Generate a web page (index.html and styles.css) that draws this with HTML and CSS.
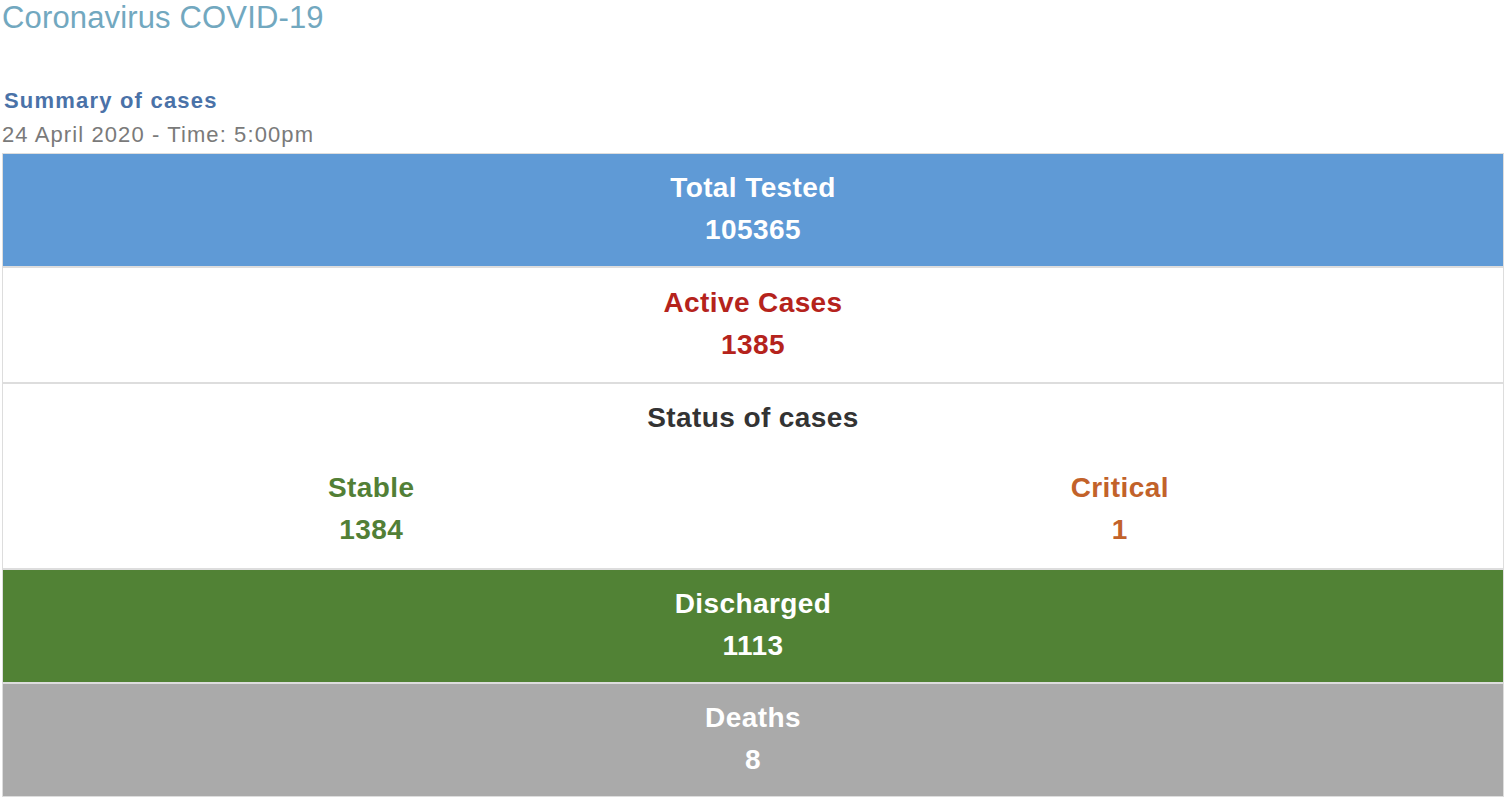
FILE: index.html
```html
<!DOCTYPE html>
<html lang="en">
<head>
<meta charset="utf-8">
<title>Coronavirus COVID-19</title>
<link rel="stylesheet" href="styles.css">
</head>
<body>
<h1 class="title">Coronavirus COVID-19</h1>
<div class="summary">Summary of cases</div>
<div class="date">24 April 2020 - Time: 5:00pm</div>
<div class="board">
  <div class="row row-tested">
    <div class="label">Total&nbsp;Tested</div>
    <div class="value">105365</div>
  </div>
  <div class="row row-active">
    <div class="label">Active Cases</div>
    <div class="value">1385</div>
  </div>
  <div class="row row-status">
    <div class="label">Status of cases</div>
    <div class="split">
      <div class="part part-stable">
        <div class="label">Stable</div>
        <div class="value">1384</div>
      </div>
      <div class="part part-critical">
        <div class="label">Critical</div>
        <div class="value">1</div>
      </div>
    </div>
  </div>
  <div class="row row-discharged">
    <div class="label">Discharged</div>
    <div class="value">1113</div>
  </div>
  <div class="row row-deaths">
    <div class="label">Deaths</div>
    <div class="value">8</div>
  </div>
</div>
</body>
</html>
```

FILE: styles.css
```css
html, body {
  margin: 0;
  background: #ffffff;
}
body {
  padding: 0 5px 0 2px;
  font-family: "Liberation Sans", Arial, sans-serif;
}
.title {
  margin: 0;
  font-size: 31px;
  line-height: 36px;
  font-weight: normal;
  letter-spacing: 0.15px;
  color: #72a8bf;
}
.summary {
  margin-top: 49px;
  padding-left: 2px;
  font-size: 22px;
  line-height: 32px;
  font-weight: bold;
  letter-spacing: 1.2px;
  color: #4a72a8;
}
.date {
  font-size: 22px;
  line-height: 36px;
  letter-spacing: 1.1px;
  color: #7a7a7a;
}
.board {
  display: flex;
  flex-direction: column;
  gap: 2px;
  background: #dddddd;
  border: 1px solid #dddddd;
}
.row {
  padding: 13px 0 15px;
  text-align: center;
  font-size: 28px;
  line-height: 42px;
  font-weight: bold;
  letter-spacing: 0.4px;
  background: #ffffff;
}
.row-tested {
  background: #5f9ad6;
  color: #ffffff;
}
.row-active {
  padding: 14px 0 16px;
  color: #b5231c;
}
.row-status {
  padding: 13px 0 17px;
  color: #333333;
}
.split {
  display: grid;
  grid-template-columns: 1fr 1fr;
  margin: 28px 9px 0 -6px;
}
.part-stable {
  color: #527f36;
}
.part-critical {
  color: #c2622a;
}
.row-discharged {
  background: #518235;
  color: #ffffff;
}
.row-deaths {
  background: #aaaaaa;
  color: #ffffff;
}
```
